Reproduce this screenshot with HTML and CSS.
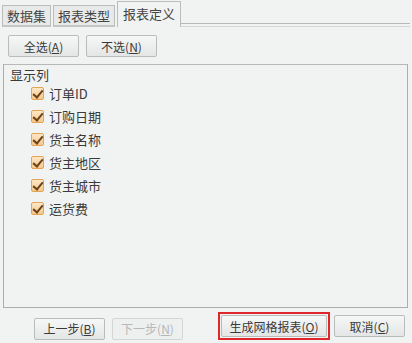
FILE: index.html
```html
<!DOCTYPE html>
<html lang="zh-CN">
<head>
  <meta charset="UTF-8" />
  <title>报表定义</title>
  <link rel="stylesheet" href="styles.css">
</head>
<body>
  <div class="dialog">
    <div class="tabs">
      <div class="tab">数据集</div>
      <div class="tab">报表类型</div>
      <div class="tab active">报表定义</div>
      <div class="tab-fill"></div>
    </div>

    <div class="page">
      <div class="toolbar">
        <button class="btn">全选(<u>A</u>)</button>
        <button class="btn">不选(<u>N</u>)</button>
      </div>

      <div class="group">
        <div class="group-title">显示列</div>
        <div class="list">
          <label class="check"><span class="box"></span>订单ID</label>
          <label class="check"><span class="box"></span>订购日期</label>
          <label class="check"><span class="box"></span>货主名称</label>
          <label class="check"><span class="box"></span>货主地区</label>
          <label class="check"><span class="box"></span>货主城市</label>
          <label class="check"><span class="box"></span>运货费</label>
        </div>
      </div>

      <div class="footer">
        <div class="nav">
          <button class="btn">上一步(<u>B</u>)</button>
          <button class="btn" disabled>下一步(<u>N</u>)</button>
        </div>
        <div class="actions">
          <span class="highlight"><button class="btn wide">生成网格报表(<u>O</u>)</button></span>
          <button class="btn">取消(<u>C</u>)</button>
        </div>
      </div>
    </div>
  </div>
</body>
</html>
```

FILE: styles.css
```css
body {
  margin: 0;
  background: #f1f3f2;
  font-family: "Noto Sans CJK SC", "Noto Sans", sans-serif;
  font-size: 12px;
  color: #3a3a3a;
}

.dialog {
  width: 412px;
  height: 343px;
  display: flex;
  flex-direction: column;
}

.tabs {
  display: flex;
  align-items: flex-end;
  height: 27px;
  padding-left: 2px;
}

.tab {
  box-sizing: border-box;
  height: 22px;
  line-height: 19px;
  padding: 0 4px;
  border: 1px solid #b9bdbc;
  border-bottom: 2px solid #c3c6c5;
  background: #e8eae9;
  color: #444;
  font-size: 13px;
  margin-right: 2px;
}

.tab.active {
  height: 26px;
  line-height: 23px;
  padding: 0 5px;
  background: #f1f3f2;
  border-bottom: none;
  margin-right: 0;
}

.tab-fill {
  flex: 1;
  height: 2px;
  border-top: 1px solid #b5b9b8;
  border-bottom: 1px solid #d4d7d6;
  margin-right: 2px;
}

.page {
  flex: 1;
  display: flex;
  flex-direction: column;
  padding: 8px 4px 1px 3px;
}

.toolbar {
  display: flex;
  gap: 7px;
  padding-left: 5px;
}

.btn {
  width: 71px;
  height: 22px;
  padding: 0;
  border: 1px solid #b8bcbb;
  border-radius: 2px;
  background: linear-gradient(#f6f7f7, #e4e6e5);
  font-family: inherit;
  font-size: 12px;
  color: #3a3a3a;
}

.btn:disabled {
  color: #b4b8b7;
  border-color: #d3d6d5;
  background: #eef0ef;
}

.group {
  margin-top: 7px;
  height: 244px;
  box-sizing: border-box;
  border: 1px solid #a9adac;
  border-top-color: #b5b9b8;
}

.group-title {
  padding: 2px 0 0 6px;
  height: 15px;
  line-height: 15px;
  font-size: 13px;
}

.list {
  padding-left: 27px;
}

.check {
  display: flex;
  align-items: center;
  height: 23px;
  font-size: 13px;
}

.box {
  position: relative;
  width: 13px;
  height: 13px;
  box-sizing: border-box;
  border: 1px solid #e3a453;
  border-radius: 2px;
  background: linear-gradient(#fde7c8, #f6c88b);
  margin-right: 5px;
}

.box::after {
  content: "";
  position: absolute;
  left: 3px;
  top: 0px;
  width: 4px;
  height: 8px;
  border: solid #6b4218;
  border-width: 0 2px 2px 0;
  transform: rotate(40deg);
}

.footer {
  display: flex;
  justify-content: space-between;
  align-items: center;
  margin-top: 4px;
  padding: 0 3px 0 31px;
}

.nav {
  display: flex;
  gap: 7px;
  margin-top: 5px;
}

.actions {
  display: flex;
  align-items: center;
  gap: 4px;
}

.btn.wide {
  width: 106px;
  display: block;
}

.highlight {
  display: block;
  border: 2px solid #e0262d;
  padding: 1px;
}
```
